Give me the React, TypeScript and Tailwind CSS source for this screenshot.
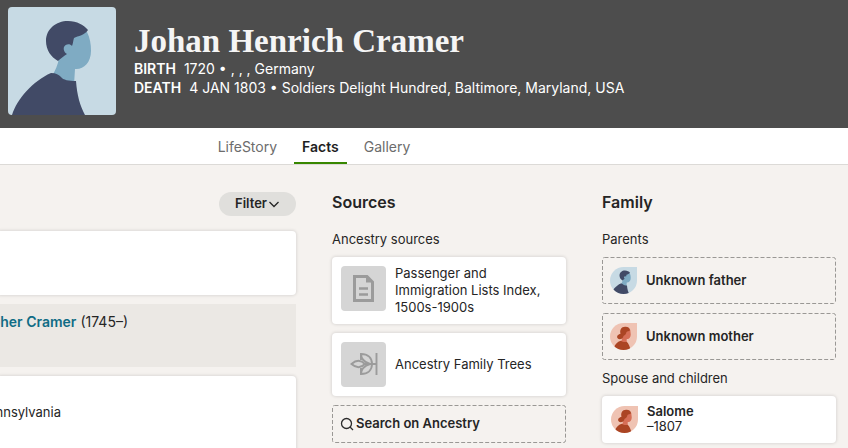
import React from 'react';
import clsx from 'clsx';

interface PortraitProps {
  className?: string;
}

const MalePortrait: React.FC<PortraitProps> = ({ className }) => (
  <svg viewBox="0 0 108 108" className={className} aria-hidden="true">
    <rect width="108" height="108" fill="#c7dae4" />
    <path d="M51 51 C50 58 47 64 44 69 L53 78 L66 78 L67 62 C75 63 83 56 83 44 C83 37 82 31 79 25 L60 24 Z" fill="#7fabc3" />
    <path d="M50 54 C43 50 38 43 38 34 C38 22 48 14 60 14 C69 14 76 18 80 23 C77 28 70 29 66 31 C65 34 65 37 64 39 C62 36 57 37 56 40 C55 43 57 46 59 47 C56 49 53 51 50 54 Z" fill="#414a66" />
    <path d="M4 108 C9 92 25 74 43 66 C48 66 51 68 53 70 C55 73 61 74 68 74 C69 88 72 99 77 108 Z" fill="#414a66" />
  </svg>
);

const FemalePortrait: React.FC<PortraitProps> = ({ className }) => (
  <svg viewBox="0 0 108 108" className={className} aria-hidden="true">
    <rect width="108" height="108" fill="#efc3b3" />
    <path d="M49 48 C50 60 48 68 43 74 L66 84 L67 64 C76 66 83 58 83 46 L81 27 L60 24 Z" fill="#d66f57" />
    <path d="M54 50 C54 58 48 65 38 65 C29 64 26 56 30 50 C33 46 37 45 42 43 C38 28 45 15 60 15 C72 14 81 21 80 29 C75 34 69 32 66 36 C65 44 60 49 54 52 Z" fill="#ab4524" />
    <path d="M13 108 C17 88 30 74 43 71 C51 77 59 77 67 75 C74 82 80 94 82 108 Z" fill="#ab4524" />
  </svg>
);

const DocumentIcon = () => (
  <svg viewBox="0 0 45 45" className="size-full" fill="none" stroke="#9b9b9b" aria-hidden="true">
    <path d="M13.500 10.500 H26 L31.500 16 V34.500 H13.500 Z" strokeWidth="3" />
    <path d="M25 9 V16.500 H32 Z" fill="#9b9b9b" stroke="none" />
    <path d="M18 22.500 H27 M18 28.500 H27" strokeWidth="2.400" />
  </svg>
);

const LeafIcon = () => (
  <svg viewBox="0 0 45 45" className="size-full" fill="none" stroke="#9b9b9b" strokeWidth="1.900" aria-hidden="true">
    <path d="M35.500 11 V33 M35.500 22 H23" />
    <path d="M10.500 22 C15 18 20 18 24 22 C20 26 15 26 10.500 22 Z" />
    <path d="M20 18 V12 C27 12 31 16 31 22 C31 28 27 32 20 32 V26" />
    <path d="M20 12 C20 17 23 20 29 22 C23 24 20 27 20 32" />
  </svg>
);

const SearchIcon = () => (
  <svg viewBox="0 0 14 14" className="size-3.5" fill="none" stroke="#2b2b2b" strokeWidth="1.300" aria-hidden="true">
    <circle cx="6.500" cy="6.500" r="5" />
    <path d="M10 10 L13 13" />
  </svg>
);

const tabs = [
  { title: 'LifeStory', active: false },
  { title: 'Facts', active: true },
  { title: 'Gallery', active: false }
];

const sources = [
  { title: 'Passenger and Immigration Lists Index, 1500s-1900s', icon: <DocumentIcon /> },
  { title: 'Ancestry Family Trees', icon: <LeafIcon /> }
];

const parents = [
  { title: 'Unknown father', Portrait: MalePortrait },
  { title: 'Unknown mother', Portrait: FemalePortrait }
];

const card = 'bg-white shadow-[0_0_3px_1px_rgba(0,0,0,0.1)]';
const leafShape = 'size-[27px] shrink-0 rounded-full rounded-tr-none';

// Dashed outline with shorter gaps than a CSS border gives
const DashedFrame = () => (
  <svg className="pointer-events-none absolute inset-0 size-full" aria-hidden="true">
    <rect x="0.500" y="0.500" className="[width:calc(100%-1px)] [height:calc(100%-1px)]" fill="none" rx="2" stroke="#9a9895" strokeDasharray="4 2" />
  </svg>
);

const Header = () => (
  <header className="flex h-32 gap-[18px] bg-[#4d4d4d] pt-[7px] pl-2 text-white">
    <MalePortrait className="size-[108px] shrink-0 rounded-sm" />
    <div className="pt-4">
      <h1 className="font-['Liberation_Serif',serif] text-[33px] leading-9 font-bold text-[#f5f5f5]">Johan Henrich Cramer</h1>
      <dl className="text-sm leading-[19px]">
        <div className="flex gap-2">
          <dt className="font-semibold">BIRTH</dt>
          <dd>1720 • , , , Germany</dd>
        </div>
        <div className="flex gap-2">
          <dt className="font-semibold">DEATH</dt>
          <dd>4 JAN 1803 • Soldiers Delight Hundred, Baltimore, Maryland, USA</dd>
        </div>
      </dl>
    </div>
  </header>
);

const Tabs = () => (
  <nav className="flex h-[37px] justify-center gap-[9px] border-b border-[#dcdad7] bg-white pr-[220px]">
    {tabs.map(tab => (
      <a
        key={tab.title}
        href="#"
        className={clsx(
          'h-9 px-2 text-sm leading-[38px]',
          tab.active ? 'border-b-2 border-[#378700] font-semibold text-[#1f1f1f]' : 'text-[#6c6c6c]'
        )}
      >
        {tab.title}
      </a>
    ))}
  </nav>
);

const Facts = () => (
  <section className="flex min-w-0 flex-col">
    <button className="flex h-6 items-center gap-px self-end rounded-full bg-[#e0dfdc] px-4 text-[13px] font-semibold">
      Filter
      <svg viewBox="0 0 12 12" className="size-3" fill="none" stroke="currentColor" strokeWidth="1.300" aria-hidden="true">
        <path d="M1.500 4 L6 8.500 L10.500 4" />
      </svg>
    </button>
    <div className={clsx(card, 'mt-[15px] h-16 rounded-r-sm')} />
    <div className="mt-[9px] h-[63px] bg-[#ebe8e4]">
      <p className="flex w-32 justify-end gap-1 pt-2 text-sm leading-5 whitespace-nowrap">
        <a href="#" className="font-semibold text-[#106c85]">pher Cramer</a>
        <span>(1745–)</span>
      </p>
    </div>
    <div className={clsx(card, 'mt-[9px] h-24 rounded-r-sm')}>
      <p className="flex w-[61px] justify-end pt-[26px] text-[13px] leading-5">nnsylvania</p>
    </div>
  </section>
);

const Sources = () => (
  <section>
    <h2 className="text-base leading-5 font-semibold">Sources</h2>
    <h3 className="mt-[17px] text-[13px] leading-5">Ancestry sources</h3>
    <ul className="mt-2 space-y-[9px]">
      {sources.map(source => (
        <li key={source.title}>
          <a href="#" className={clsx(card, 'flex items-center gap-[9px] rounded-sm px-[9px] py-2 text-[13px] leading-[17px]')}>
            <span className="my-px size-[45px] shrink-0 self-start rounded-sm bg-[#d5d5d5]">{source.icon}</span>
            <span>{source.title}</span>
          </a>
        </li>
      ))}
    </ul>
    <button className="relative mt-[9px] flex h-[38px] w-full items-center gap-0.5 pl-2 text-[13px] font-semibold">
      <DashedFrame />
      <SearchIcon />
      Search on Ancestry
    </button>
  </section>
);

const Family = () => (
  <section>
    <h2 className="text-base leading-5 font-semibold">Family</h2>
    <h3 className="mt-[17px] text-[13px] leading-5">Parents</h3>
    <div className="mt-2 space-y-[9px]">
      {parents.map(({ title, Portrait }) => (
        <button key={title} className="relative flex h-[47px] w-full items-center gap-[9px] pl-2 text-[13px] font-semibold">
          <DashedFrame />
          <Portrait className={leafShape} />
          {title}
        </button>
      ))}
    </div>
    <h3 className="mt-2 text-[13px] leading-5">Spouse and children</h3>
    <a href="#" className={clsx(card, 'mt-2 flex items-center gap-[9px] rounded-sm pt-2 pb-[9px] pl-[9px] text-[13px] leading-[15px]')}>
      <FemalePortrait className={leafShape} />
      <span>
        <strong className="block font-semibold">Salome</strong>
        –1807
      </span>
    </a>
  </section>
);

export default function App() {
  return (
    <div className="h-screen overflow-hidden bg-[#f5f2ef] font-['Inter',sans-serif] text-[#252525]">
      <Header />
      <Tabs />
      <main className="grid grid-cols-[minmax(0,1fr)_234px_234px] gap-9 pt-[27px] pr-3">
        <Facts />
        <Sources />
        <Family />
      </main>
    </div>
  );
}
